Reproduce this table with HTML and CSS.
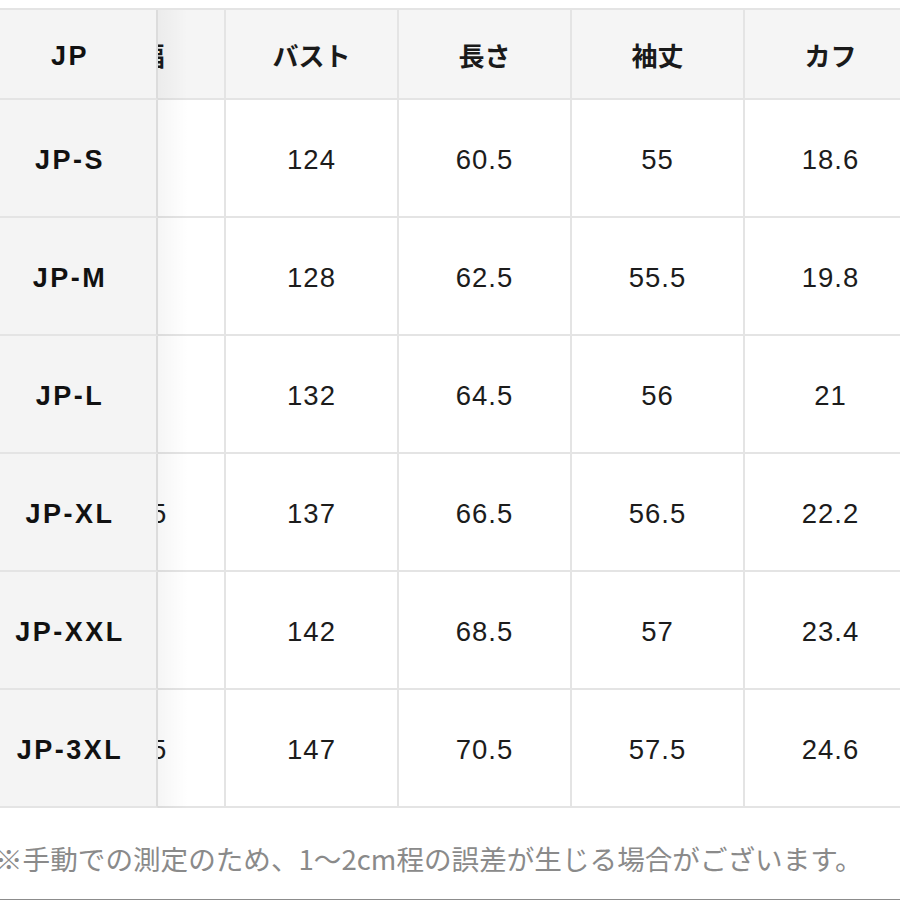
FILE: index.html
```html
<!DOCTYPE html>
<html lang="ja">
<head>
<meta charset="utf-8">
<title>サイズ表</title>
<link rel="stylesheet" href="styles.css">
</head>
<body>
<div class="table">
  <div class="row head">
    <div class="cell jp">JP</div>
    <div class="cell hidden-col">肩幅</div>
    <div class="cell">バスト</div>
    <div class="cell">長さ</div>
    <div class="cell">袖丈</div>
    <div class="cell">カフ</div>
  </div>
  <div class="row">
    <div class="cell jp">JP-S</div>
    <div class="cell hidden-col num">47</div>
    <div class="cell num">124</div>
    <div class="cell num">60.5</div>
    <div class="cell num">55</div>
    <div class="cell num">18.6</div>
  </div>
  <div class="row">
    <div class="cell jp">JP-M</div>
    <div class="cell hidden-col num">48</div>
    <div class="cell num">128</div>
    <div class="cell num">62.5</div>
    <div class="cell num">55.5</div>
    <div class="cell num">19.8</div>
  </div>
  <div class="row">
    <div class="cell jp">JP-L</div>
    <div class="cell hidden-col num">49</div>
    <div class="cell num">132</div>
    <div class="cell num">64.5</div>
    <div class="cell num">56</div>
    <div class="cell num">21</div>
  </div>
  <div class="row">
    <div class="cell jp">JP-XL</div>
    <div class="cell hidden-col num">50.5</div>
    <div class="cell num">137</div>
    <div class="cell num">66.5</div>
    <div class="cell num">56.5</div>
    <div class="cell num">22.2</div>
  </div>
  <div class="row">
    <div class="cell jp">JP-XXL</div>
    <div class="cell hidden-col num">51</div>
    <div class="cell num">142</div>
    <div class="cell num">68.5</div>
    <div class="cell num">57</div>
    <div class="cell num">23.4</div>
  </div>
  <div class="row">
    <div class="cell jp">JP-3XL</div>
    <div class="cell hidden-col num">52.5</div>
    <div class="cell num">147</div>
    <div class="cell num">70.5</div>
    <div class="cell num">57.5</div>
    <div class="cell num">24.6</div>
  </div>
</div>
<p class="note">※手動での測定のため、1〜2cm程の誤差が生じる場合がございます。</p>
</body>
</html>
```

FILE: styles.css
```css
html, body {
  margin: 0;
  padding: 0;
  background: #ffffff;
}
body {
  height: 900px;
  box-sizing: border-box;
  border-bottom: 1px solid #8c8c8c;
  overflow: hidden;
  font-family: "Liberation Sans", "Noto Sans CJK JP", sans-serif;
  color: #1a1a1a;
}
.table {
  margin-top: 8px;
  border-top: 2px solid #e4e4e4;
  overflow: hidden;
  width: 900px;
}
.row {
  display: flex;
  height: 118px;
}
.row.head {
  height: 90px;
  background: #f5f5f5;
}
.cell {
  flex: none;
  width: 171px;
  box-sizing: border-box;
  width: 173px;
  border-right: 2px solid #e4e4e4;
  border-bottom: 2px solid #e4e4e4;
  display: flex;
  align-items: center;
  justify-content: center;
  font-family: "Noto Sans CJK JP", sans-serif;
  font-weight: 700;
  font-size: 26px;
  white-space: nowrap;
}
.cell.num {
  padding-top: 4px;
  font-family: "Liberation Sans", "Noto Sans CJK JP", sans-serif;
  font-weight: 400;
  font-size: 27.5px;
  letter-spacing: 1px;
  color: #1c1c1c;
}
.cell.jp {
  width: 158px;
  padding: 4px 16px 0 0;
  position: relative;
  z-index: 1;
  background: #f4f4f4;
  border-right-color: #dcdcdc;
  font-family: "Liberation Sans", sans-serif;
  font-weight: 700;
  font-size: 27px;
  letter-spacing: 2.5px;
  color: #111;
}
.cell.jp::after {
  content: "";
  position: absolute;
  top: 0;
  bottom: -2px;
  left: 100%;
  margin-left: 2px;
  width: 30px;
  background: linear-gradient(to right, rgba(0, 0, 0, 0.04), rgba(0, 0, 0, 0));
}
.cell.hidden-col {
  margin-left: -105px;
}
.note {
  margin: 34px 0 0 -5px;
  font-family: "Noto Sans CJK JP", sans-serif;
  font-size: 27.6px;
  line-height: 32px;
  color: #8a8a8a;
  white-space: nowrap;
}
```
